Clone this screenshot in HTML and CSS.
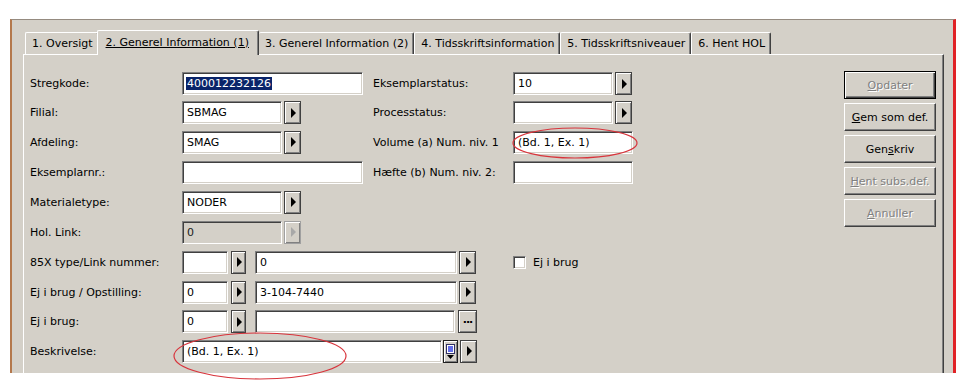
FILE: index.html
```html
<!DOCTYPE html>
<html lang="da">
<head>
    <meta charset="UTF-8">
    <title>Eksemplar - Generel Information</title>
    <link rel="stylesheet" href="styles.css">
</head>
<body>

<div class="window">
    <div class="tabs">
        <div class="tab">1. Oversigt</div>
        <div class="tab active"><u>2. Generel Information (1)</u></div>
        <div class="tab">3. Generel Information (2)</div>
        <div class="tab">4. Tidsskriftsinformation</div>
        <div class="tab">5. Tidsskriftsniveauer</div>
        <div class="tab">6. Hent HOL</div>
    </div>

    <div class="panel">
        <div class="form">
            <!-- row 1 -->
            <div class="label">Stregkode:</div>
            <div class="cell"><div class="field w181"><span class="selected">400012232126</span></div></div>
            <div class="label">Eksemplarstatus:</div>
            <div class="cell"><div class="field w100">10</div><div class="arrow"></div></div>

            <!-- row 2 -->
            <div class="label">Filial:</div>
            <div class="cell"><div class="field w100">SBMAG</div><div class="arrow"></div></div>
            <div class="label">Processtatus:</div>
            <div class="cell"><div class="field w100"></div><div class="arrow"></div></div>

            <!-- row 3 -->
            <div class="label">Afdeling:</div>
            <div class="cell"><div class="field w100">SMAG</div><div class="arrow"></div></div>
            <div class="label">Volume (a) Num. niv. 1</div>
            <div class="cell"><div class="field w120">(Bd. 1, Ex. 1)</div></div>

            <!-- row 4 -->
            <div class="label">Eksemplarnr.:</div>
            <div class="cell"><div class="field w181"></div></div>
            <div class="label">Hæfte (b) Num. niv. 2:</div>
            <div class="cell"><div class="field w120"></div></div>

            <!-- row 5 -->
            <div class="label">Materialetype:</div>
            <div class="cell span3"><div class="field w100">NODER</div><div class="arrow"></div></div>

            <!-- row 6 -->
            <div class="label">Hol. Link:</div>
            <div class="cell span3"><div class="field w100 disabled">0</div><div class="arrow disabled"></div></div>

            <!-- row 7 -->
            <div class="label">85X type/Link nummer:</div>
            <div class="cell span2">
                <div class="field w46"></div><div class="arrow narrow"></div>
                <div class="field w202 gap">0</div><div class="arrow"></div>
            </div>
            <div class="cell">
                <div class="check"></div><span class="check-label">Ej i brug</span>
            </div>

            <!-- row 8 -->
            <div class="label">Ej i brug / Opstilling:</div>
            <div class="cell span3">
                <div class="field w46">0</div><div class="arrow narrow"></div>
                <div class="field w202 gap">3-104-7440</div><div class="arrow"></div>
            </div>

            <!-- row 9 -->
            <div class="label">Ej i brug:</div>
            <div class="cell span3">
                <div class="field w46">0</div><div class="arrow narrow"></div>
                <div class="field w200 gap"></div><div class="dots">...</div>
            </div>

            <!-- row 10 -->
            <div class="label">Beskrivelse:</div>
            <div class="cell span3">
                <div class="field w260">(Bd. 1, Ex. 1)</div>
                <div class="list-btn">
                    <svg width="13" height="21" viewBox="0 0 13 21">
                        <rect x="2.5" y="3.5" width="8" height="9" fill="#fff" stroke="#303060"/>
                        <line x1="4" y1="6" x2="9" y2="6" stroke="#2030e0" stroke-width="1.4"/>
                        <line x1="4" y1="8" x2="9" y2="8" stroke="#2030e0" stroke-width="1.4"/>
                        <line x1="4" y1="10" x2="9" y2="10" stroke="#2030e0" stroke-width="1.4"/>
                        <polygon points="3,14 10,14 6.5,18" fill="#000"/>
                    </svg>
                </div>
                <div class="arrow"></div>
            </div>
        </div>

        <div class="actions">
            <div class="button default disabled"><u>O</u>pdater</div>
            <div class="button"><u>G</u>em som def.</div>
            <div class="button">Gen<u>s</u>kriv</div>
            <div class="button disabled"><u>H</u>ent subs.def.</div>
            <div class="button disabled"><u>A</u>nnuller</div>
        </div>
    </div>
</div>

<svg class="marks" width="966" height="384" viewBox="0 0 966 384">
    <ellipse cx="575" cy="143" rx="62" ry="15" fill="none" stroke="#d8343c" stroke-width="1.2"/>
    <ellipse cx="260" cy="356" rx="86" ry="23" fill="none" stroke="#d8343c" stroke-width="1.2"/>
</svg>

</body>
</html>
```

FILE: styles.css
```css
body {
    margin: 0;
    background-color: #fff;
    font-family: "DejaVu Sans", Verdana, sans-serif;
    font-size: 11px;
    color: #000;
}

.window {
    margin: 19px 0 0 10px;
    width: 946px;
    height: 354px;
    box-sizing: border-box;
    background-color: #d4d0c8;
    border-left: 2px solid #b4784c;
    border-top: 1px solid #958b80;
    border-right: 3px solid #e02226;
    padding: 10px 9px 0 11px;
    overflow: hidden;
}

/* tab strip */

.tabs {
    display: flex;
    align-items: flex-end;
    height: 24px;
    padding-left: 2px;
}

.tab {
    height: 22px;
    box-sizing: border-box;
    padding: 0 5px 0 6px;
    display: flex;
    align-items: center;
    white-space: nowrap;
    border-top: 1px solid #fff;
    border-left: 1px solid #fff;
    border-right: 1px solid #404040;
    box-shadow: inset -1px 0 0 #808080;
    border-radius: 2px 2px 0 0;
}

.tab.active {
    height: 25px;
    margin-bottom: -1px;
    margin-left: -2px;
    padding: 0 9px 2px 8px;
    background-color: #d4d0c8;
    position: relative;
    z-index: 1;
}

.tab.active + .tab {
    border-left: none;
}

/* page */

.panel {
    height: 330px;
    box-sizing: border-box;
    border-top: 1px solid #fff;
    border-left: 1px solid #fff;
    border-right: 1px solid #404040;
    box-shadow: inset -1px 0 0 #808080;
    padding: 14px 7px 0 6px;
    display: flex;
    justify-content: space-between;
}

.form {
    display: grid;
    grid-template-columns: 152px 191px 140px 140px;
    grid-template-rows: 29px 29px 30px 30px 30px 30px 30px 30px 29px 30px;
    align-items: center;
}

.label {
    white-space: nowrap;
}

.cell {
    display: flex;
    align-items: center;
}

.span2 {
    grid-column: span 2;
}

.span3 {
    grid-column: span 3;
}

.field {
    height: 23px;
    box-sizing: border-box;
    background-color: #fff;
    border: 1px solid;
    border-color: #808080 #fff #fff #808080;
    box-shadow: inset 1px 1px 0 #404040, inset -1px -1px 0 #d4d0c8;
    padding: 0 4px;
    display: flex;
    align-items: center;
    white-space: nowrap;
}

.field.disabled {
    background-color: #d4d0c8;
    color: #202020;
}

.w46 { width: 46px; }
.w100 { width: 100px; }
.w120 { width: 120px; }
.w181 { width: 181px; }
.w200 { width: 200px; }
.w202 { width: 202px; }
.w260 { width: 260px; }

.gap {
    margin-left: 9px;
}

.selected {
    background-color: #0a246a;
    color: #fff;
    margin-left: -1px;
    padding: 0 1px;
}

.arrow,
.dots,
.list-btn {
    height: 23px;
    box-sizing: border-box;
    background-color: #d4d0c8;
    border: 1px solid #404040;
    box-shadow: inset 1px 1px 0 #fff, inset -1px -1px 0 #808080;
    display: flex;
    align-items: center;
    justify-content: center;
}

.arrow {
    width: 17px;
    margin-left: 2px;
}

.arrow.narrow {
    width: 15px;
    margin-left: 3px;
}

.arrow::before {
    content: "";
    border-left: 5px solid #000;
    border-top: 5px solid transparent;
    border-bottom: 5px solid transparent;
    margin-left: 1px;
}

.arrow.disabled {
    border-color: #a0a0a0;
}

.arrow.disabled::before {
    border-left-color: #a8a8a8;
}

.dots {
    width: 19px;
    margin-left: 3px;
    font-weight: bold;
    letter-spacing: -1px;
    padding-bottom: 4px;
}

.list-btn {
    width: 15px;
    margin-left: 1px;
    border-color: #202020;
}

.check {
    width: 13px;
    height: 13px;
    box-sizing: border-box;
    background-color: #fff;
    border: 1px solid;
    border-color: #808080 #fff #fff #808080;
    box-shadow: inset 1px 1px 0 #404040, inset -1px -1px 0 #d4d0c8;
}

.check-label {
    margin-left: 7px;
}

/* buttons on the right */

.actions {
    display: flex;
    flex-direction: column;
    gap: 4px;
    margin-top: 2px;
}

.button {
    width: 92px;
    height: 28px;
    box-sizing: border-box;
    border: 1px solid;
    border-color: #fff #404040 #404040 #fff;
    box-shadow: inset -1px -1px 0 #808080;
    display: flex;
    align-items: center;
    justify-content: center;
    white-space: nowrap;
}

.button.default {
    border: 1px solid #000;
    box-shadow: inset 1px 1px 0 #fff, inset -1px -1px 0 #404040, inset -2px -2px 0 #808080;
}

.button.disabled {
    color: #808080;
    text-shadow: 1px 1px 0 #fff;
}

.marks {
    position: absolute;
    top: 0;
    left: 0;
    pointer-events: none;
}
```
